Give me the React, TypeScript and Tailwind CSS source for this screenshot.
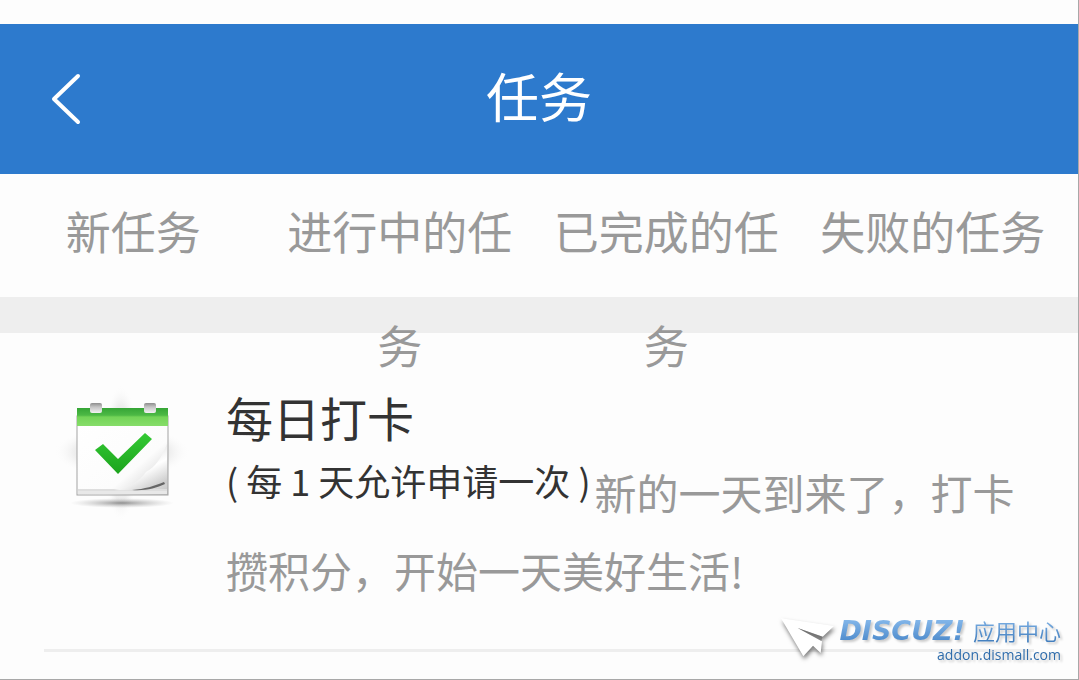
import React from 'react';

const tabs = ['新任务', '进行中的任务', '已完成的任务', '失败的任务'];

const BackIcon = () => (
  <svg className="h-14 w-8" viewBox="0 0 32 56" fill="none" aria-hidden="true">
    <path d="M29 5 L5 28 L29 51" stroke="#fff" strokeWidth="4" strokeLinecap="round" strokeLinejoin="round" />
  </svg>
);

// Calendar page with a green header, two rings and a curled corner
const CalendarIcon = () => (
  <svg className="h-[136px] w-[136px]" viewBox="0 0 136 136" aria-hidden="true">
    <defs>
      <linearGradient id="calHead" x1="0" y1="0" x2="0" y2="1">
        <stop offset="0" stopColor="#35a536" />
        <stop offset="0.4" stopColor="#4db945" />
        <stop offset="0.5" stopColor="#74d458" />
        <stop offset="1" stopColor="#86dd69" />
      </linearGradient>
      <linearGradient id="calPage" x1="0" y1="0" x2="1" y2="1">
        <stop offset="0" stopColor="#fff" />
        <stop offset="0.65" stopColor="#fcfcfc" />
        <stop offset="1" stopColor="#c4c4c4" />
      </linearGradient>
      <linearGradient id="calCheck" x1="0" y1="0" x2="0" y2="1">
        <stop offset="0" stopColor="#34ca34" />
        <stop offset="1" stopColor="#1ca31d" />
      </linearGradient>
      <linearGradient id="calRing" x1="0" y1="0" x2="0" y2="1">
        <stop offset="0" stopColor="#8d8d8d" />
        <stop offset="0.4" stopColor="#c4c4c4" />
        <stop offset="1" stopColor="#f2f2f2" />
      </linearGradient>
      <radialGradient id="calGlow">
        <stop offset="0" stopColor="#999" stopOpacity="0.4" />
        <stop offset="0.7" stopColor="#aaa" stopOpacity="0.18" />
        <stop offset="1" stopColor="#fff" stopOpacity="0" />
      </radialGradient>
      <radialGradient id="calFloor">
        <stop offset="0" stopColor="#666" stopOpacity="0.7" />
        <stop offset="1" stopColor="#aaa" stopOpacity="0" />
      </radialGradient>
      <linearGradient id="calCurl" x1="0.3" y1="0.2" x2="0.8" y2="1">
        <stop offset="0" stopColor="#dcdcdc" />
        <stop offset="0.5" stopColor="#fff" />
        <stop offset="1" stopColor="#c4c4c4" />
      </linearGradient>
    </defs>
    <ellipse cx="68" cy="66" rx="68" ry="26" fill="url(#calGlow)" />
    <ellipse cx="67" cy="67" rx="18" ry="68" fill="url(#calGlow)" />
    <ellipse cx="68" cy="117" rx="52" ry="5" fill="url(#calFloor)" />
    <rect x="23" y="30" width="91" height="79" fill="url(#calPage)" stroke="#a3a3a3" />
    <path d="M24 104h89" stroke="#dedede" strokeWidth="2" />
    <path d="M60 104c15-2 26-9 32-18 9-5 15-13 21-28v39c-14 6-34 8-53 7z" fill="url(#calCurl)" />
    <path d="M78 104c13-1 22-4 32-8l1 2c-9 4-19 7-33 6z" fill="#666" />
    <rect x="24" y="105" width="89" height="3" fill="#e8e8e8" />
    <rect x="23" y="22" width="91" height="18" fill="url(#calHead)" />
    <rect x="36" y="17" width="12" height="10" rx="2" fill="url(#calRing)" />
    <rect x="90" y="17" width="12" height="10" rx="2" fill="url(#calRing)" />
    <path d="M41 64 L49 58 L64 73 L91 47 L98 53 L64 88 Z" fill="url(#calCheck)" />
  </svg>
);

const PlaneIcon = () => (
  <svg className="h-12 w-15 shrink-0 drop-shadow-[1px_3px_2px_rgba(0,0,0,0.5)]" viewBox="32 52 180 144" aria-hidden="true">
    <path d="M38 62 L197 85 L163 117 L88 91 L161 131 L157 166 L134 144 L105 176 Z" fill="#fff" />
    <path d="M88 91 L163 117 L159 130 Z" fill="#555" fillOpacity="0.45" />
  </svg>
);

const Watermark = () => (
  <a
    href="#addon"
    className="absolute right-[17px] bottom-4 z-20 flex items-start font-['Open_Sans','Noto_Sans_CJK_SC',sans-serif]"
  >
    <PlaneIcon />
    <span className="flex flex-col items-end">
      <span className="flex items-center drop-shadow-[2px_2px_1px_rgba(0,0,0,0.2)]">
        <span className="bg-linear-to-b from-[#8fc0f0] to-[#3f80c4] bg-clip-text pr-2 font-['DejaVu_Sans',sans-serif] text-[27px] leading-8 font-bold text-transparent italic">
          DISCUZ!
        </span>
        <span className="bg-linear-to-b from-[#83b5e8] to-[#3977b8] bg-clip-text text-[22px] leading-7 text-transparent">
          应用中心
        </span>
      </span>
      <span className="text-[14px] leading-4 text-[#2f6cab] drop-shadow-[2px_2px_1px_rgba(0,0,0,0.2)]">
        addon.dismall.com
      </span>
    </span>
  </a>
);

const App: React.FC = () => {
  return (
    <div className="relative min-h-screen border-r border-b border-[#a8a8a8] bg-[#fdfdfd] pt-6 font-['Noto_Sans_CJK_SC',sans-serif]">
      <header className="grid h-[150px] grid-cols-[1fr_auto_1fr] items-center bg-[#2d7acd] px-[49px] text-white">
        <button type="button" aria-label="返回" className="justify-self-start">
          <BackIcon />
        </button>
        <h1 className="pb-2 text-[53px] leading-none">任务</h1>
      </header>

      {/* Long labels wrap and run over the section below */}
      <nav className="relative z-10 grid h-[123px] grid-cols-4 pr-3 text-center text-[45px] leading-[114px] text-[#999]">
        {tabs.map((tab) => (
          <a key={tab} href="#task">
            {tab}
          </a>
        ))}
      </nav>

      <main className="border-t-[36px] border-[#eee]">
        <ul className="px-11">
          <li className="flex border-b-3 border-[#eee] pt-12 pb-10">
            <div className="w-[182px] shrink-0 pt-[5px] pl-[10px]">
              <CalendarIcon />
            </div>
            <div className="flex-1">
              <h2 className="text-[47px] leading-[72px] text-[#333]">每日打卡</h2>
              <p className="text-[42px] leading-[78px] text-[#999]">
                <span className="mr-1 align-[14px] text-[36px] leading-none text-[#333]">( 每 1 天允许申请一次 )</span>
                新的一天到来了，打卡攒积分，开始一天美好生活!
              </p>
            </div>
          </li>
        </ul>
      </main>

      <Watermark />
    </div>
  );
};

export default App;
